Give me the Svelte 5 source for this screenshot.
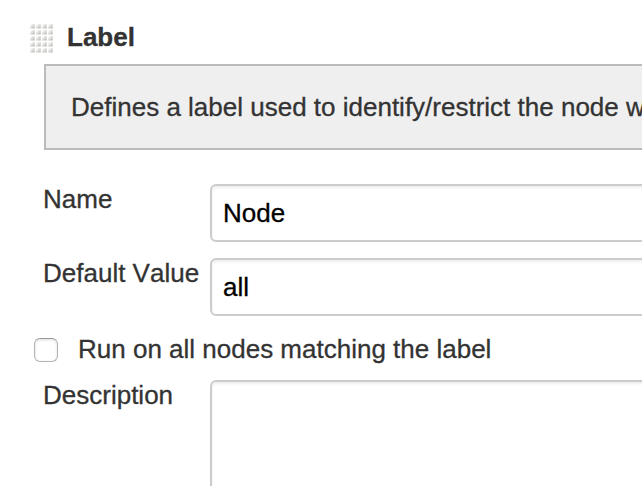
<script>
  let name = $state('Node');
  let defaultValue = $state('all');
  let allNodes = $state(false);
  let description = $state('');
  const columns = [0, 6, 12, 18];
  const rows = [0, 6, 12, 18, 24];
</script>

<main class="parameter">
  <header>
    <svg class="grip" width="24" height="30" viewBox="0 0 24 30" aria-hidden="true">
      <defs>
        <linearGradient id="dot" x1="0" y1="0" x2="1" y2="1">
          <stop offset="0.1" stop-color="#fff" />
          <stop offset="0.5" stop-color="#dededb" />
          <stop offset="1" stop-color="#b0b0ad" />
        </linearGradient>
      </defs>
      {#each rows as y}
        {#each columns as x}
          <rect {x} {y} width="4.7" height="4.5" fill="url(#dot)" />
        {/each}
      {/each}
    </svg>
    <h1>Label</h1>
  </header>
  <div class="help">Defines a label used to identify/restrict the node w</div>
  <div class="row">
    <label for="name">Name</label>
    <input id="name" type="text" bind:value={name} />
  </div>
  <div class="row">
    <label for="default">Default Value</label>
    <input id="default" type="text" bind:value={defaultValue} />
  </div>
  <div class="check-row">
    <input id="all" type="checkbox" bind:checked={allNodes} />
    <label for="all">Run on all nodes matching the label</label>
  </div>
  <div class="row">
    <label for="description">Description</label>
    <textarea id="description" bind:value={description}></textarea>
  </div>
</main>

<style>
  :global(body) {
    margin: 0;
    background: #fff;
  }
  .parameter {
    box-sizing: border-box;
    height: 486px;
    overflow: hidden;
    padding-top: 22px;
    font: 26px/30px "Liberation Sans", Arial, sans-serif;
    font-kerning: none;
    -webkit-text-stroke: 0.3px;
    color: #333;
    white-space: nowrap;
  }
  header {
    display: flex;
    height: 42px;
    padding-left: 30px;
  }
  .grip {
    flex: none;
    margin: 2px 13px 0 0;
  }
  h1 {
    margin: 0;
    font: inherit;
    font-weight: bold;
    font-kerning: none;
  }
  .help {
    box-sizing: border-box;
    width: 700px;
    height: 86px;
    margin: 0 0 34px 44px;
    padding: 26px 25px;
    border: 2px solid #bbb;
    background: #efefef;
  }
  .row {
    display: flex;
    width: 760px;
    padding-left: 43px;
    margin-bottom: 16px;
  }
  .row label {
    flex: none;
    width: 167px;
  }
  .row input,
  textarea {
    box-sizing: border-box;
    flex: 1;
    height: 58px;
    margin: 0;
    padding: 0 11px;
    border: 2px solid #ccc;
    border-radius: 6px;
    outline: none;
    background: #fff;
    box-shadow: inset 0 2px 3px rgba(0, 0, 0, 0.07);
    font: inherit;
    color: #000;
  }
  textarea {
    height: 160px;
    resize: none;
  }
  .check-row {
    display: flex;
    height: 46px;
    padding: 2px 0 0 34px;
  }
  .check-row input {
    appearance: none;
    box-sizing: border-box;
    width: 24px;
    height: 24px;
    margin: 4px 20px 0 0;
    border: 1px solid #b4b4b4;
    border-top-color: #999;
    border-radius: 6px;
    background: #fff;
    box-shadow: inset 0 1px 3px rgba(0, 0, 0, 0.14);
  }
</style>
